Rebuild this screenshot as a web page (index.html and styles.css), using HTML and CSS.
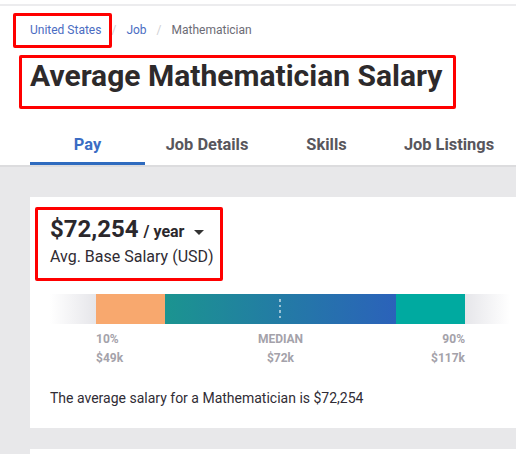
FILE: index.html
```html
<!DOCTYPE html>
<html>
<head>
<meta charset="utf-8">
<link rel="stylesheet" href="styles.css">
</head>
<body>
<div class="topbar"></div>
<header class="header">
  <nav class="crumbs">
    <a class="crumb link mark mark-crumb">United States</a>
    <span class="sep">/</span>
    <a class="crumb link">Job</a>
    <span class="sep">/</span>
    <span class="crumb current">Mathematician</span>
  </nav>
  <h1 class="title"><span class="mark mark-title">Average Mathematician Salary</span></h1>
  <div class="tabs">
    <div class="tab active">Pay</div>
    <div class="tab">Job Details</div>
    <div class="tab">Skills</div>
    <div class="tab">Job Listings</div>
  </div>
</header>
<main class="main">
  <section class="card">
    <div class="salary mark mark-salary">
      <div class="amount-row">
        <span class="amount">$72,254</span>
        <span class="period">/ year</span>
        <span class="caret"></span>
      </div>
      <div class="sub">Avg. Base Salary (USD)</div>
    </div>
    <div class="bar">
      <div class="fade-l"></div>
      <div class="seg-low"></div>
      <div class="seg-mid"></div>
      <div class="seg-high"></div>
      <div class="fade-r"></div>
    </div>
    <div class="labels">
      <div class="lab lab-low">10%<br>$49k</div>
      <div class="lab lab-mid">MEDIAN<br>$72k</div>
      <div class="lab lab-high">90%<br>$117k</div>
    </div>
    <p class="summary">The average salary for a Mathematician is $72,254</p>
  </section>
  <section class="card card-next"></section>
</main>
</body>
</html>
```

FILE: styles.css
```css
* { box-sizing: border-box; }
html, body { margin: 0; padding: 0; }
body {
  font-family: Roboto, "Liberation Sans", Arial, sans-serif;
  color: #2f2b33;
  background: #ffffff;
  width: 516px;
  height: 454px;
  overflow: hidden;
}
.topbar {
  height: 6px;
  border-bottom: 2px solid #ececee;
}
.header {
  background: #fff;
  border-bottom: 2px solid #dcdcde;
}
.crumbs {
  margin-top: 16px;
  padding-left: 30px;
  font-size: 12px;
  line-height: 16px;
  display: flex;
  align-items: baseline;
}
.crumb { text-decoration: none; }
.link { color: #4a6cc2; }
.current { color: #6c6b75; }
.sep {
  color: #d0d0d4;
  margin: 0 10px;
}
.title {
  margin: 20px 0 0 30px;
  font-size: 30px;
  line-height: 36px;
  font-weight: 700;
  color: #2d2a2b;
}
.title span { display: inline-block; }
.tabs {
  margin-top: 30px;
  margin-left: 30px;
  display: grid;
  grid-template-columns: 115px 124px 115px 130px;
  column-gap: 0;
}
.tab {
  text-align: center;
  font-size: 16.4px;
  line-height: 20px;
  font-weight: 700;
  color: #58565c;
  padding: 11px 0 7px;
  border-bottom: 3px solid transparent;
  white-space: nowrap;
}
.tab.active {
  color: #3a6cc4;
  border-bottom-color: #2f6bbf;
}
.main {
  background: #e8e8ea;
  padding: 30px 0 0 30px;
  height: 287px;
  overflow: hidden;
}
.card {
  background: #fff;
  padding: 18px 0 20px 20px;
}
.card-next {
  margin-top: 21px;
  height: 40px;
  padding: 0;
}
.mark { position: relative; }
.mark::after {
  content: "";
  position: absolute;
  border: 3px solid #ff0000;
  border-radius: 2px;
  pointer-events: none;
}
.mark-crumb::after { top: -9px; bottom: -10px; left: -17px; right: -11px; }
.mark-title::after { top: -3px; bottom: -15px; left: -11px; right: -14px; }
.mark-salary::after { top: -8px; bottom: -14px; left: -15px; right: -9px; }
.salary { display: inline-block; }
.amount-row {
  height: 28px;
  line-height: 28px;
  display: flex;
  align-items: baseline;
  overflow: visible;
}
.amount {
  font-size: 24px;
  font-weight: 700;
  color: #2b282c;
}
.period {
  font-size: 16px;
  font-weight: 700;
  margin-left: 5px;
  color: #2b282c;
}
.caret {
  width: 0;
  height: 0;
  border-left: 5px solid transparent;
  border-right: 5px solid transparent;
  border-top: 5px solid #333;
  margin-left: 10px;
  align-self: center;
  margin-top: 6px;
}
.sub {
  margin-top: 4px;
  font-size: 16px;
  line-height: 20px;
  color: #2f2b33;
}
.bar {
  margin-top: 27px;
  height: 30px;
  display: grid;
  grid-template-columns: 46px 69px 231px 69px 45px;
}
.fade-l { background: linear-gradient(to right, #ffffff, #e6e6ea); }
.fade-r { background: linear-gradient(to left, #ffffff, #e6e6ea); }
.seg-low { background: #f8a86e; }
.seg-high { background: #00aaa0; }
.seg-mid {
  position: relative;
  background: linear-gradient(to right, #1b9490, #2b62ba);
}
.seg-mid::after {
  content: "";
  position: absolute;
  left: 114px;
  top: 5px;
  width: 2px;
  height: 20px;
  background: repeating-linear-gradient(to bottom, rgba(255,255,255,0.55) 0 2.7px, transparent 2.7px 5.6px);
}
.labels {
  margin-top: 6px;
  display: grid;
  grid-template-columns: 46px 69px 231px 69px 45px;
  font-size: 12px;
  line-height: 19px;
  font-weight: 700;
  color: #a4a2aa;
}
.lab-low { grid-column: 2; text-align: left; white-space: nowrap; }
.lab-mid { grid-column: 3; text-align: center; }
.lab-high { grid-column: 4; text-align: right; white-space: nowrap; }
.summary {
  margin: 20px 0 0;
  font-size: 14px;
  line-height: 20px;
  color: #302c35;
}
```
